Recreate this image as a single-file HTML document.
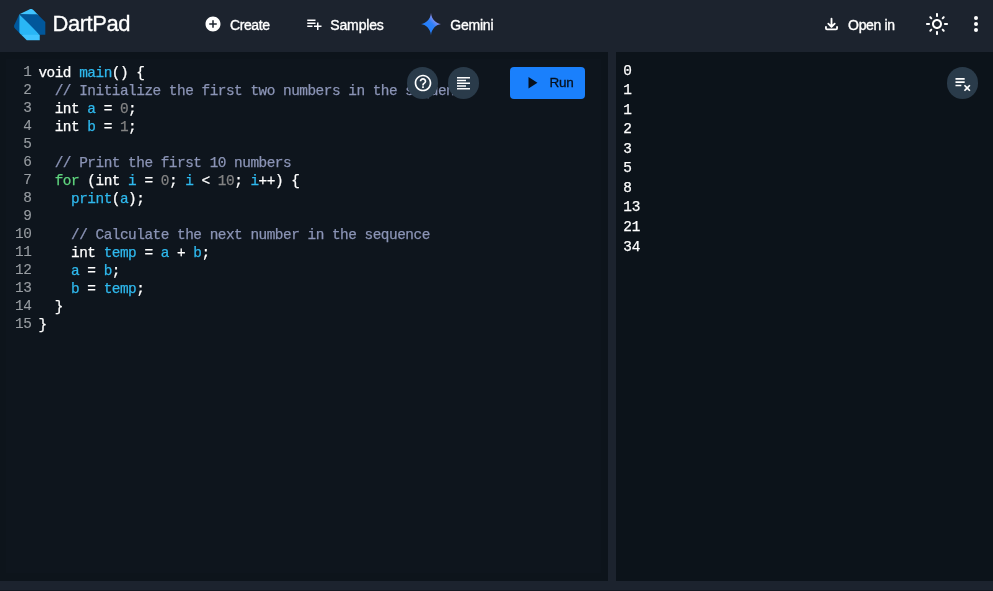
<!DOCTYPE html>
<html lang="en">
<head>
<meta charset="utf-8">
<title>DartPad</title>
<style>
*{box-sizing:border-box;margin:0;padding:0}
html,body{width:993px;height:591px;overflow:hidden;background:#1c232e}
body{position:relative;font-family:"Liberation Sans",sans-serif;color:#fff}
.abs{position:absolute}
.t{will-change:transform}
#header{left:0;top:0;width:993px;height:52px;background:#1c232e}
#title{left:52.500px;top:11.400px;font-size:22px;line-height:26px;letter-spacing:-0.450px;color:#fff;white-space:nowrap;-webkit-text-stroke:0.300px #fff}
.nav{font-size:14px;line-height:18px;color:#fff;white-space:nowrap;-webkit-text-stroke:0.35px #fff}
#editor{left:0;top:52px;width:608px;height:529px;background:#0d141b;overflow:hidden}
#editor-inner{left:6px;top:7px;width:594.500px;height:514px;background:#0e151d}
#output{left:616px;top:52px;width:377px;height:529px;background:#0c131a;overflow:hidden}
#bottom{left:0;top:581px;width:993px;height:10px;background:#1c232e;border-bottom:1px solid #141a23}
.ln{left:0;width:31.3px;text-align:right;font-family:"Liberation Mono",monospace;font-size:14.4px;letter-spacing:-0.482px;line-height:18px;color:#989da2;height:18px;-webkit-text-stroke:0.12px currentColor}
.cl{left:38.4px;font-family:"Liberation Mono",monospace;font-size:14.4px;letter-spacing:-0.482px;-webkit-text-stroke:0.25px currentColor;line-height:18px;height:18px;white-space:pre;color:#fff}
.c{color:#8b94b6}.v{color:#2fb9ee}.k{color:#5fd47e}.n{color:#838383}
.ol{left:623.300px;font-family:"Liberation Mono",monospace;font-size:14.400px;letter-spacing:-0.240px;-webkit-text-stroke:0.250px currentColor;line-height:20px;height:20px;white-space:pre;color:#fff}
.fab{width:31.600px;height:31.600px;border-radius:50%;background:#2a3b4a}
#run{left:510.300px;top:67px;width:74.800px;height:32px;border-radius:4px;background:#1a80fc}
#runtxt{left:549.400px;top:74px;letter-spacing:-0.200px;font-size:13.5px;line-height:18px;color:#06101c;-webkit-text-stroke:0.3px #06101c}
svg{position:absolute;overflow:visible}
</style>
</head>
<body>
<div class="abs t" style="left:0;top:0;width:993px;height:591px">
<div id="header" class="abs">
  <svg style="left:14.3px;top:8.500px" width="31.300" height="31.300" viewBox="0 0 502.870 502.870">
    <path fill="#01579b" d="M102.560 400.310L16.570 314.320C6.370 303.860 0 289.080 0 274.630c0-6.690 3.770-17.150 6.620-23.150L86 86.140z"/>
    <path fill="#40c4ff" d="M397 102.560L311.010 16.570C303.510 9.030 287.880 0 274.650 0c-11.370 0-22.520 2.290-29.720 6.610L86.040 86.140z"/>
    <path fill="#40c4ff" d="M205.110 502.870h208.370v-89.300L258.030 363.940 115.820 413.570z"/>
    <path fill="#29b6f6" d="M86 354c0 26.540 3.330 33.050 16.530 46.320l13.230 13.240h297.720L267.930 248.080 86 86.140z"/>
    <path fill="#01579b" d="M350.700 86H86l327.480 327.470h89.300V208.370L397 102.510C382.120 87.620 368.920 86 350.700 86z"/>
  </svg>
  <div id="title" class="abs">DartPad</div>

  <svg style="left:204.300px;top:15.250px" width="18" height="18" viewBox="0 0 24 24"><path fill="#fff" d="M12 2C6.480 2 2 6.480 2 12s4.480 10 10 10 10-4.480 10-10S17.520 2 12 2zm5 11h-4v4h-2v-4H7v-2h4V7h2v4h4v2z"/></svg>
  <div class="abs nav" style="left:230px;top:16px;letter-spacing:-0.420px">Create</div>

  <svg style="left:304.750px;top:15.250px" width="18" height="18" viewBox="0 0 24 24"><path fill="#fff" d="M14 10H3v2h11v-2zm0-4H3v2h11V6zm4 8v-4h-2v4h-4v2h4v4h2v-4h4v-2h-4zM3 16h7v-2H3v2z"/></svg>
  <div class="abs nav" style="left:330.3px;top:16px;letter-spacing:-0.15px">Samples</div>

  <svg style="left:420.900px;top:13.300px" width="20" height="22.200" viewBox="0 0 20 22.200">
    <defs><linearGradient id="gg" x1="0.150" y1="0.850" x2="0.850" y2="0.150"><stop offset="0" stop-color="#1a7dfb"/><stop offset="0.550" stop-color="#2f80f8"/><stop offset="0.800" stop-color="#8a90f0"/><stop offset="1" stop-color="#a99af0"/></linearGradient></defs>
    <path fill="url(#gg)" d="M10 0 C10.50 6.50 15.50 10.50 20.00 11.10 C15.50 11.70 10.50 15.70 10.00 22.20 C9.50 15.70 4.50 11.70 0.00 11.10 C4.50 10.50 9.50 6.50 10.00 0.00 Z"/>
  </svg>
  <div class="abs nav" style="left:450.300px;top:16px;letter-spacing:-0.220px">Gemini</div>

  <svg style="left:824px;top:16px" width="16" height="16" viewBox="824 16 16 16" fill="none" stroke="#fff" stroke-width="1.850" stroke-linecap="round" stroke-linejoin="round">
    <path d="M825.950 26.300V28.300a1 1 0 0 0 1 1h9.100a1 1 0 0 0 1-1V26.300" stroke-linecap="butt"/>
    <path d="M831.500 18.700V26.300M828.300 23.700L831.500 26.900L834.700 23.700"/>
  </svg>
  <div class="abs nav" style="left:848.100px;top:16px;letter-spacing:-0.330px">Open in</div>

  <svg style="left:925.400px;top:12.300px" width="24" height="24" viewBox="0 0 24 24"><path fill="#fff" d="M12,9c1.650,0,3,1.350,3,3s-1.350,3-3,3s-3-1.350-3-3S10.350,9,12,9 M12,7c-2.760,0-5,2.240-5,5s2.240,5,5,5s5-2.240,5-5 S14.760,7,12,7L12,7z M2,13l2,0c0.550,0,1-0.450,1-1s-0.450-1-1-1l-2,0c-0.550,0-1,0.450-1,1S1.450,13,2,13z M20,13l2,0c0.550,0,1-0.450,1-1 s-0.450-1-1-1l-2,0c-0.550,0-1,0.450-1,1S19.450,13,20,13z M11,2v2c0,0.550,0.450,1,1,1s1-0.450,1-1V2c0-0.550-0.450-1-1-1S11,1.450,11,2z M11,20v2c0,0.550,0.450,1,1,1s1-0.450,1-1v-2c0-0.550-0.450-1-1-1C11.450,19,11,19.450,11,20z M5.990,4.580c-0.390-0.390-1.030-0.390-1.410,0 c-0.390,0.390-0.390,1.030,0,1.410l1.060,1.060c0.390,0.390,1.030,0.390,1.410,0s0.390-1.030,0-1.410L5.990,4.580z M18.360,16.950 c-0.390-0.390-1.030-0.390-1.410,0c-0.390,0.390-0.390,1.030,0,1.410l1.060,1.060c0.390,0.390,1.030,0.390,1.410,0c0.390-0.390,0.390-1.030,0-1.410 L18.360,16.950z M19.420,5.990c0.390-0.390,0.390-1.030,0-1.410c-0.390-0.390-1.030-0.390-1.410,0l-1.060,1.060c-0.390,0.390-0.390,1.030,0,1.410 s1.030,0.390,1.410,0L19.420,5.990z M7.050,18.360c0.390-0.390,0.390-1.030,0-1.410c-0.390-0.390-1.030-0.390-1.410,0l-1.060,1.060 c-0.390,0.390-0.390,1.030,0,1.410s1.030,0.390,1.410,0L7.050,18.360z"/></svg>

  <svg style="left:964.400px;top:12.300px" width="24" height="24" viewBox="0 0 24 24"><circle cx="12" cy="6" r="2" fill="#fff"/><circle cx="12" cy="12" r="2" fill="#fff"/><circle cx="12" cy="18" r="2" fill="#fff"/></svg>
</div>

<div id="editor" class="abs">
  <div id="editor-inner" class="abs"></div>
</div>
<div id="output" class="abs"></div>
<div id="bottom" class="abs"></div>

<!-- line numbers -->
<div class="abs ln" style="top:62.7px">1</div>
<div class="abs ln" style="top:80.7px">2</div>
<div class="abs ln" style="top:98.7px">3</div>
<div class="abs ln" style="top:116.7px">4</div>
<div class="abs ln" style="top:134.7px">5</div>
<div class="abs ln" style="top:152.7px">6</div>
<div class="abs ln" style="top:170.7px">7</div>
<div class="abs ln" style="top:188.7px">8</div>
<div class="abs ln" style="top:206.7px">9</div>
<div class="abs ln" style="top:224.7px">10</div>
<div class="abs ln" style="top:242.7px">11</div>
<div class="abs ln" style="top:260.7px">12</div>
<div class="abs ln" style="top:278.7px">13</div>
<div class="abs ln" style="top:296.7px">14</div>
<div class="abs ln" style="top:314.7px">15</div>

<!-- code -->
<div class="abs cl" style="top:63.6px">void <span class="v">main</span>() {</div>
<div class="abs cl" style="top:81.6px">  <span class="c">// Initialize the first two numbers in the sequence</span></div>
<div class="abs cl" style="top:99.6px">  int <span class="v">a</span> = <span class="n">0</span>;</div>
<div class="abs cl" style="top:117.6px">  int <span class="v">b</span> = <span class="n">1</span>;</div>
<div class="abs cl" style="top:153.6px">  <span class="c">// Print the first 10 numbers</span></div>
<div class="abs cl" style="top:171.6px">  <span class="k">for</span> (int <span class="v">i</span> = <span class="n">0</span>; <span class="v">i</span> &lt; <span class="n">10</span>; <span class="v">i</span>++) {</div>
<div class="abs cl" style="top:189.6px">    <span class="v">print</span>(<span class="v">a</span>);</div>
<div class="abs cl" style="top:225.6px">    <span class="c">// Calculate the next number in the sequence</span></div>
<div class="abs cl" style="top:243.6px">    int <span class="v">temp</span> = <span class="v">a</span> + <span class="v">b</span>;</div>
<div class="abs cl" style="top:261.6px">    <span class="v">a</span> = <span class="v">b</span>;</div>
<div class="abs cl" style="top:279.6px">    <span class="v">b</span> = <span class="v">temp</span>;</div>
<div class="abs cl" style="top:297.6px">  }</div>
<div class="abs cl" style="top:315.6px">}</div>

<!-- editor buttons -->
<div class="abs fab" style="left:406.900px;top:67px"></div>
<svg style="left:412.700px;top:72.800px" width="20" height="20" viewBox="0 0 24 24"><path fill="#fff" d="M11 18h2v-2h-2v2zm1-16C6.480 2 2 6.480 2 12s4.480 10 10 10 10-4.480 10-10S17.520 2 12 2zm0 18c-4.410 0-8-3.590-8-8s3.590-8 8-8 8 3.590 8 8-3.590 8-8 8zm0-14c-2.210 0-4 1.790-4 4h2c0-1.100.9-2 2-2s2 .9 2 2c0 2-3 1.750-3 5h2c0-2.250 3-2.500 3-5 0-2.210-1.790-4-4-4z"/></svg>
<div class="abs fab" style="left:447.900px;top:67px"></div>
<svg style="left:457px;top:76.700px" width="13" height="12.600" viewBox="0 0 13 12.600">
  <rect x="0" y="0" width="13" height="1.500" fill="#fff"/>
  <rect x="0" y="2.750" width="9" height="1.500" fill="#fff"/>
  <rect x="0" y="5.500" width="13" height="1.500" fill="#fff"/>
  <rect x="0" y="8.250" width="9" height="1.500" fill="#fff"/>
  <rect x="0" y="11" width="13" height="1.500" fill="#fff"/>
</svg>
<div id="run" class="abs"></div>
<svg style="left:521.700px;top:73.200px" width="19.500" height="19.500" viewBox="0 0 24 24"><path fill="#06101c" d="M8 5v14l11-7z"/></svg>
<div id="runtxt" class="abs">Run</div>

<!-- output -->
<div class="abs ol" style="top:60.500px">0</div>
<div class="abs ol" style="top:80.060px">1</div>
<div class="abs ol" style="top:99.610px">1</div>
<div class="abs ol" style="top:119.170px">2</div>
<div class="abs ol" style="top:138.720px">3</div>
<div class="abs ol" style="top:158.280px">5</div>
<div class="abs ol" style="top:177.830px">8</div>
<div class="abs ol" style="top:197.390px">13</div>
<div class="abs ol" style="top:216.940px">21</div>
<div class="abs ol" style="top:236.500px">34</div>
<div class="abs fab" style="left:946.900px;top:67.100px"></div>
<svg style="left:952.500px;top:72.800px" width="20" height="20" viewBox="0 0 24 24"><path fill="#fff" d="M14 10H3v2h11v-2zm0-4H3v2h11V6zM3 16h7v-2H3v2zm11.410 6L17 19.410 19.590 22 21 20.590 18.410 18 21 15.410 19.590 14 17 16.590 14.410 14 13 15.410 15.590 18 13 20.590 14.410 22z"/></svg>
</div>
</body>
</html>
